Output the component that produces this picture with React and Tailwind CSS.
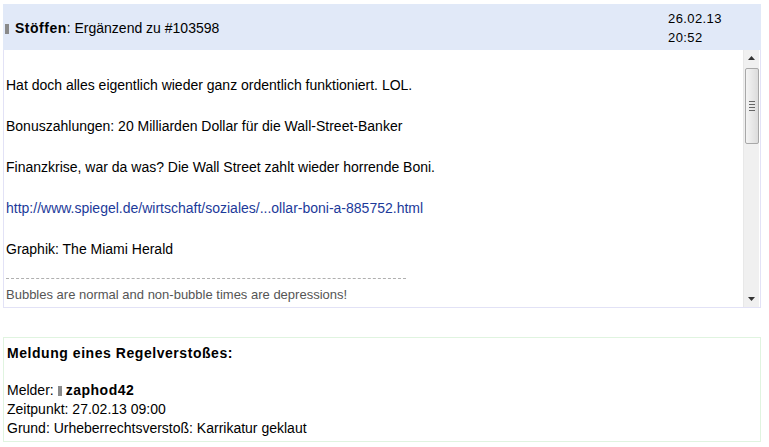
export default function App() {
  return (
    <div className="w-[769px] h-[447px] bg-white text-[14px] text-black" style={{ fontFamily: '"Liberation Sans", Arial, sans-serif' }}>
      <div className="pt-[4px] px-[2px] w-[762px] ml-[1px]">
        <div className="flex h-[46px] bg-[#e1e9f8]">
          <div className="flex-1 flex items-center pl-[2px] pt-[3px]">
            <span className="inline-block w-[4px] h-[10px] bg-[#8a8a8a] mr-[6px]" />
            <span className="font-bold tracking-[0.5px]">Stöffen</span>
            <span>: Ergänzend zu #103598</span>
          </div>
          <div className="w-[93px] pt-[5px] leading-[19px] text-[13px] tracking-[0.4px]">
            <div>26.02.13</div>
            <div>20:52</div>
          </div>
        </div>
        <div className="flex h-[258px] border-x border-b border-[#e2e2f6]">
          <div className="flex-1 overflow-hidden pl-[2px] pt-[25px] leading-[20.5px]">
            <div>Hat doch alles eigentlich wieder ganz ordentlich funktioniert. LOL.</div>
            <div className="mt-[20.5px]">Bonuszahlungen: 20 Milliarden Dollar für die Wall-Street-Banker</div>
            <div className="mt-[20.5px]">Finanzkrise, war da was? Die Wall Street zahlt wieder horrende Boni.</div>
            <div className="mt-[20.5px] text-[#1c3a9a]">http://www.spiegel.de/wirtschaft/soziales/...ollar-boni-a-885752.html</div>
            <div className="mt-[20.5px]">Graphik: The Miami Herald</div>
            <div className="mt-[18px] w-[400px] border-t border-dashed border-[#b0b0b0]" />
            <div className="mt-[8px] text-[13px] text-[#555] leading-[16px]">Bubbles are normal and non-bubble times are depressions!</div>
          </div>
          <div className="w-[16px] mr-[1px] bg-[#f0f0f0] flex flex-col items-center border-l border-[#e8e8e8]">
            <div className="h-[15px] flex items-center justify-center">
              <svg width="7" height="4" viewBox="0 0 7 4"><path d="M3.5 0 L7 4 L0 4 Z" fill="#333" /></svg>
            </div>
            <div className="w-[14px] h-[76px] mt-[3px] rounded-[2px] border border-[#a8a8a8] bg-gradient-to-r from-[#f4f4f4] to-[#dcdcdc] flex flex-col items-center justify-center gap-[2px]">
              <div className="w-[6px] h-[1px] bg-[#666]" />
              <div className="w-[6px] h-[1px] bg-[#666]" />
              <div className="w-[6px] h-[1px] bg-[#666]" />
              <div className="w-[6px] h-[1px] bg-[#666]" />
            </div>
            <div className="flex-1" />
            <div className="h-[15px] flex items-center justify-center pb-[2px]">
              <svg width="7" height="4" viewBox="0 0 7 4"><path d="M0 0 L7 0 L3.5 4 Z" fill="#333" /></svg>
            </div>
          </div>
        </div>
        <div className="mt-[29px] h-[105px] border border-[#e0f4e0] pl-[3px] pt-[6px] leading-[19px]">
          <div className="font-bold tracking-[0.55px]">Meldung eines Regelverstoßes:</div>
          <div className="mt-[18px] flex items-center">
            <span>Melder: </span>
            <span className="inline-block w-[4px] h-[10px] bg-[#8a8a8a] ml-[4px] mr-[4px]" />
            <span className="font-bold tracking-[0.5px]">zaphod42</span>
          </div>
          <div>Zeitpunkt: 27.02.13 09:00</div>
          <div>Grund: Urheberrechtsverstoß: Karrikatur geklaut</div>
        </div>
      </div>
    </div>
  );
}
